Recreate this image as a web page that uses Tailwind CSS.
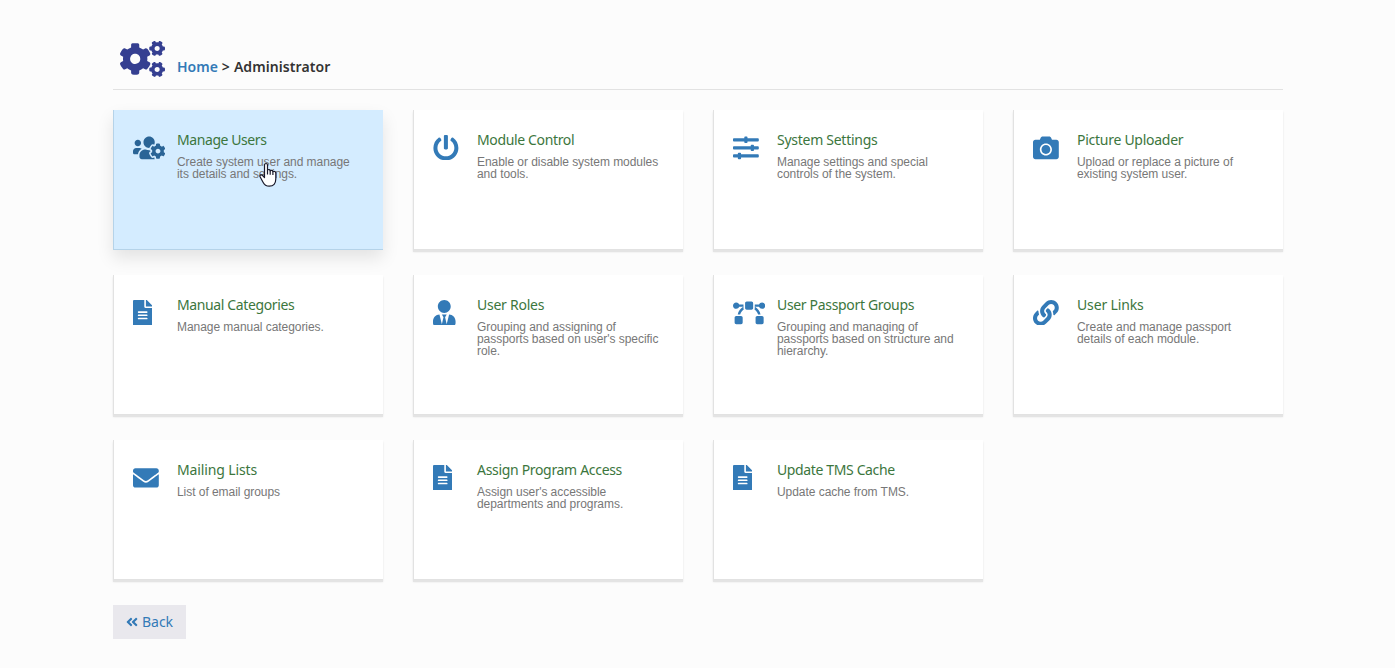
<!DOCTYPE html>
<html lang="en">
<head>
<meta charset="utf-8">
<title>Administrator</title>
<script src="https://cdn.jsdelivr.net/npm/@tailwindcss/browser@4"></script>
</head>
<body class="bg-[#fcfcfc] font-['Liberation_Sans',Arial,sans-serif]">
<svg class="hidden">
  <symbol id="file" viewBox="0 0 384 512"><path d="M224 136V0H24C10.700 0 0 10.700 0 24v464c0 13.300 10.700 24 24 24h336c13.300 0 24-10.700 24-24V160H248c-13.200 0-24-10.800-24-24zm64 236c0 6.600-5.400 12-12 12H108c-6.600 0-12-5.400-12-12v-8c0-6.600 5.400-12 12-12h168c6.600 0 12 5.400 12 12v8zm0-64c0 6.600-5.400 12-12 12H108c-6.600 0-12-5.400-12-12v-8c0-6.600 5.400-12 12-12h168c6.600 0 12 5.400 12 12v8zm0-72v8c0 6.600-5.400 12-12 12H108c-6.600 0-12-5.400-12-12v-8c0-6.600 5.400-12 12-12h168c6.600 0 12 5.400 12 12zm96-114.100v6.100H256V0h6.100c6.400 0 12.500 2.500 17 7l97.900 98c4.500 4.500 7 10.600 7 16.900z"/></symbol>
</svg>
<main class="w-[1170px] ml-[113px] pt-10">
  <header class="flex h-[50px] border-b border-[#e2e2e2]">
    <svg class="ml-[7px] mt-px w-[45px] h-9 shrink-0" viewBox="0 0 640 512" fill="#353f91"><path d="M512.1 191l-8.200 14.300c-3 5.300-9.400 7.500-15.100 5.400-11.800-4.400-22.600-10.700-32.100-18.600-4.600-3.800-5.800-10.500-2.800-15.700l8.200-14.300c-6.900-8-12.300-17.300-15.900-27.400h-16.500c-6 0-11.200-4.300-12.200-10.300-2-12-2.100-24.600 0-37.100 1-6 6.200-10.400 12.200-10.400h16.500c3.600-10.100 9-19.400 15.900-27.400l-8.200-14.300c-3-5.200-1.900-11.900 2.800-15.700 9.500-7.900 20.400-14.200 32.100-18.600 5.700-2.100 12.100.1 15.100 5.400l8.200 14.300c10.500-1.900 21.200-1.900 31.700 0L552 6.300c3-5.300 9.400-7.500 15.100-5.400 11.800 4.400 22.600 10.700 32.100 18.600 4.600 3.800 5.800 10.500 2.800 15.700l-8.200 14.300c6.900 8 12.300 17.300 15.900 27.400h16.500c6 0 11.200 4.300 12.200 10.300 2 12 2.100 24.600 0 37.100-1 6-6.200 10.400-12.200 10.400h-16.500c-3.600 10.100-9 19.400-15.900 27.400l8.200 14.300c3 5.200 1.900 11.900-2.800 15.700-9.500 7.900-20.400 14.200-32.100 18.600-5.700 2.100-12.100-.1-15.100-5.400l-8.200-14.300c-10.400 1.900-21.200 1.900-31.700 0zm-10.500-58.800c38.500 29.600 82.400-14.300 52.800-52.800-38.500-29.700-82.400 14.300-52.800 52.800zM386.300 286.100l33.700 16.800c10.100 5.800 14.500 18.100 10.500 29.100-8.900 24.200-26.400 46.400-42.600 65.800-7.400 8.900-20.200 11.100-30.300 5.300l-29.100-16.800c-16 13.700-34.600 24.600-54.900 31.700v33.600c0 11.600-8.300 21.600-19.700 23.600-24.600 4.200-50.400 4.400-75.900 0-11.500-2-20-11.900-20-23.600V418c-20.300-7.200-38.900-18-54.900-31.700L74 403c-10 5.800-22.900 3.600-30.300-5.300-16.200-19.400-33.300-41.600-42.200-65.700-4-10.900.4-23.200 10.500-29.100l33.300-16.800c-3.900-20.900-3.900-42.400 0-63.400L12 205.800c-10.100-5.800-14.600-18.100-10.500-29 8.900-24.200 26-46.400 42.200-65.800 7.400-8.900 20.200-11.100 30.300-5.300l29.100 16.800c16-13.700 34.600-24.600 54.900-31.700V57.100c0-11.500 8.200-21.500 19.600-23.500 24.600-4.200 50.500-4.400 76-.1 11.500 2 20 11.900 20 23.600v33.600c20.300 7.200 38.900 18 54.900 31.700l29.100-16.800c10-5.800 22.900-3.600 30.300 5.300 16.200 19.400 33.200 41.600 42.100 65.800 4 10.900.1 23.200-10 29.100l-33.700 16.800c3.900 21 3.900 42.500 0 63.500zm-117.600 21.100c59.200-77-28.700-164.900-105.700-105.700-59.200 77 28.700 164.900 105.700 105.700zm243.400 182.700l-8.200 14.300c-3 5.300-9.400 7.500-15.100 5.400-11.800-4.400-22.600-10.700-32.100-18.600-4.600-3.800-5.800-10.500-2.800-15.700l8.200-14.300c-6.900-8-12.300-17.300-15.900-27.400h-16.500c-6 0-11.200-4.300-12.200-10.300-2-12-2.100-24.600 0-37.100 1-6 6.200-10.400 12.200-10.400h16.500c3.600-10.100 9-19.400 15.900-27.400l-8.200-14.300c-3-5.200-1.900-11.900 2.800-15.700 9.500-7.900 20.400-14.200 32.100-18.600 5.700-2.100 12.100.1 15.100 5.400l8.200 14.300c10.500-1.900 21.200-1.900 31.700 0l8.200-14.300c3-5.300 9.400-7.500 15.100-5.400 11.800 4.400 22.600 10.700 32.100 18.600 4.600 3.800 5.800 10.500 2.800 15.700l-8.200 14.300c6.900 8 12.300 17.300 15.900 27.400h16.500c6 0 11.200 4.300 12.200 10.300 2 12 2.100 24.600 0 37.100-1 6-6.200 10.400-12.200 10.400h-16.500c-3.600 10.100-9 19.400-15.900 27.400l8.200 14.300c3 5.200 1.900 11.900-2.800 15.700-9.500 7.900-20.400 14.200-32.100 18.600-5.700 2.100-12.100-.1-15.100-5.400l-8.200-14.300c-10.400 1.900-21.200 1.900-31.700 0zM501.600 431c38.500 29.600 82.400-14.300 52.800-52.800-38.500-29.600-82.400 14.300-52.800 52.800z"/></svg>
    <h1 class="ml-3 mt-[17px] flex gap-1 font-['Noto_Sans',sans-serif] font-semibold text-[14px] leading-5 text-[#333]"><a class="text-[#337ab7]">Home</a><span>&gt;</span><span class="tracking-[0.08px]">Administrator</span></h1>
  </header>
  <section class="mt-5 grid grid-cols-4 gap-x-[30px] gap-y-[25px]" id="cards"></section>
  <a class="mt-[25px] flex h-[34px] w-[73px] items-center justify-center gap-1 bg-[#e9e8ed] font-['Noto_Sans',sans-serif] text-[14px] text-[#337ab7]"><svg class="h-[14px] w-3" viewBox="0 0 448 512" fill="currentColor"><path d="M223.700 239l136-136c9.400-9.400 24.600-9.400 33.900 0l22.600 22.600c9.400 9.400 9.400 24.600 0 33.900L319.900 256l96.400 96.400c9.400 9.400 9.400 24.600 0 33.900L393.700 409c-9.400 9.400-24.600 9.400-33.900 0l-136-136c-9.500-9.400-9.500-24.600-.1-34zm-192 34l136 136c9.400 9.400 24.600 9.400 33.900 0l22.600-22.600c9.400-9.400 9.400-24.600 0-33.900L127.900 256l96.400-96.400c9.400-9.400 9.400-24.600 0-33.900L201.700 103c-9.400-9.400-24.600-9.400-33.900 0l-136 136c-9.500 9.400-9.500 24.600-.1 34z"/></svg><span class="pb-0.5">Back</span></a>
</main>
<svg class="absolute left-[259px] top-[162px] w-[18px] h-[25px]" viewBox="0 0 18 25" fill="#fff" stroke="#1a1a2b" stroke-width="1.200" stroke-linejoin="round"><path d="M5.500 15.500V3.200c0-2.300 3-2.300 3 0V8c1-.9 2.500-.5 2.700.8 1-.8 2.500-.4 2.700.8 1.200-.7 2.900 0 2.900 1.600v5.500c0 5-2.300 7.500-6.500 7.500-3.600 0-5.200-1.800-6.400-4.200L1.200 15c-.8-1.600 1-3 2.400-1.500z"/><path d="M8.500 8v4.500M11.200 8.800v3.900M13.900 9.600v3.300" fill="none"/></svg>
<script>
const P = {
users: [640, "M610.5 341.3c2.6-14.1 2.6-28.5 0-42.6l25.8-14.9c3-1.7 4.3-5.2 3.3-8.5-6.7-21.6-18.2-41.2-33.2-57.4-2.3-2.5-6-3.1-9-1.4l-25.8 14.9c-10.9-9.3-23.4-16.5-36.9-21.3v-29.8c0-3.4-2.4-6.4-5.7-7.1-22.3-5-45-4.8-66.2 0-3.3.7-5.7 3.7-5.7 7.1v29.8c-13.5 4.8-26 12-36.9 21.3l-25.8-14.9c-2.9-1.7-6.7-1.1-9 1.4-15 16.2-26.5 35.8-33.2 57.4-1 3.3.4 6.8 3.3 8.5l25.8 14.9c-2.6 14.1-2.6 28.5 0 42.6l-25.8 14.9c-3 1.7-4.3 5.2-3.3 8.5 6.7 21.6 18.2 41.1 33.2 57.4 2.3 2.5 6 3.1 9 1.4l25.8-14.9c10.9 9.3 23.4 16.5 36.9 21.3v29.8c0 3.4 2.4 6.4 5.7 7.1 22.3 5 45 4.8 66.2 0 3.3-.7 5.7-3.7 5.7-7.1v-29.8c13.5-4.8 26-12 36.9-21.3l25.8 14.9c2.9 1.7 6.7 1.1 9-1.4 15-16.2 26.5-35.8 33.2-57.4 1-3.3-.4-6.8-3.3-8.5l-25.8-14.9zM496 368.5c-26.8 0-48.5-21.8-48.5-48.5s21.8-48.5 48.5-48.5 48.5 21.8 48.5 48.5-21.7 48.5-48.5 48.5zM96 224c35.3 0 64-28.7 64-64s-28.7-64-64-64-64 28.7-64 64 28.7 64 64 64zm224 32c1.9 0 3.7-.5 5.6-.6 8.3-21.7 20.5-42.1 36.3-59.2 7.4-8 17.9-12.6 28.9-12.6 6.9 0 13.7 1.8 19.6 5.3l7.9 4.6c.8-.5 1.6-.9 2.4-1.4 7-14.6 11.2-30.8 11.2-48 0-61.9-50.1-112-112-112S208 82.1 208 144c0 61.9 50.1 112 112 112zm105.2 194.5c-2.3-1.2-4.6-2.6-6.8-3.9-8.2 4.8-15.3 9.8-27.5 9.8-10.9 0-21.4-4.6-28.9-12.6-18.3-19.8-32.3-43.9-40.2-69.6-10.7-34.5 24.9-49.7 25.8-50.3-.1-2.6-.1-5.2 0-7.8l-7.9-4.6c-3.8-2.2-7-5-9.8-8.1-3.3.2-6.5.6-9.8.6-24.6 0-47.6-6-68.5-16h-8.3C179.6 288 128 339.6 128 403.2V432c0 26.5 21.5 48 48 48h255.4c-3.7-6-6.2-12.8-6.2-20.3v-9.2zM173.1 274.6C161.5 263.1 145.6 256 128 256H64c-35.3 0-64 28.7-64 64v32c0 17.7 14.3 32 32 32h65.900c6.300-47.400 34.900-87.300 75.200-109.400z"],
power: [512, "M400 54.1c63 45 104 118.6 104 201.9 0 136.8-110.8 247.7-247.5 248C120 504.3 8.2 393 8 256.4 7.9 173.1 48.900 99.300 111.800 54.200c11.700-8.300 28-4.800 35 7.700L162.600 90c5.900 10.500 3.100 23.800-6.600 31-41.500 30.800-68 79.600-68 134.900-.1 92.300 74.500 168.100 168 168.100 91.600 0 168.600-74.200 168-169.100-.3-51.800-24.700-101.800-68.100-134-9.700-7.200-12.400-20.500-6.500-30.900l15.800-28.100c7-12.400 23.200-16.100 34.800-7.800zM296 264V24c0-13.300-10.700-24-24-24h-32c-13.300 0-24 10.700-24 24v240c0 13.300 10.700 24 24 24h32c13.300 0 24-10.700 24-24z"],
sliders: [512, "M496 384H160v-16c0-8.800-7.200-16-16-16h-32c-8.800 0-16 7.200-16 16v16H16c-8.800 0-16 7.200-16 16v32c0 8.800 7.200 16 16 16h80v16c0 8.800 7.200 16 16 16h32c8.800 0 16-7.200 16-16v-16h336c8.800 0 16-7.200 16-16v-32c0-8.800-7.200-16-16-16zm0-160h-80v-16c0-8.800-7.200-16-16-16h-32c-8.800 0-16 7.200-16 16v16H16c-8.800 0-16 7.200-16 16v32c0 8.800 7.200 16 16 16h336v16c0 8.800 7.200 16 16 16h32c8.800 0 16-7.200 16-16v-16h80c8.800 0 16-7.200 16-16v-32c0-8.800-7.200-16-16-16zm0-160H288V48c0-8.800-7.200-16-16-16h-32c-8.800 0-16 7.200-16 16v16H16C7.200 64 0 71.200 0 80v32c0 8.800 7.200 16 16 16h208v16c0 8.800 7.200 16 16 16h32c8.800 0 16-7.200 16-16v-16h208c8.800 0 16-7.200 16-16V80c0-8.800-7.200-16-16-16z"],
camera: [512, "M512 144v288c0 26.500-21.500 48-48 48H48c-26.500 0-48-21.500-48-48V144c0-26.500 21.500-48 48-48h88l12.300-32.900c7-18.700 24.900-31.100 44.900-31.100h125.500c20 0 37.900 12.400 44.900 31.100L376 96h88c26.500 0 48 21.500 48 48zM376 288c0-66.200-53.800-120-120-120s-120 53.800-120 120 53.800 120 120 120 120-53.800 120-120zm-32 0c0 48.500-39.500 88-88 88s-88-39.500-88-88 39.500-88 88-88 88 39.500 88 88z"],
tie: [448, "M224 256c70.700 0 128-57.300 128-128S294.700 0 224 0 96 57.300 96 128s57.300 128 128 128zm95.800 32.600L272 480l-32-136 32-56h-96l32 56-32 136-47.800-191.400C56.900 292 0 350.300 0 422.400V464c0 26.500 21.500 48 48 48h352c26.500 0 48-21.500 48-48v-41.600c0-72.100-56.900-130.400-128.200-133.800z"],
bezier: [640, "M368 32h-96c-17.670 0-32 14.330-32 32v96c0 17.670 14.330 32 32 32h96c17.670 0 32-14.330 32-32V64c0-17.670-14.330-32-32-32zM208 88h-84.750C113.750 64.560 90.840 48 64 48 28.660 48 0 76.650 0 112s28.660 64 64 64c26.840 0 49.750-16.560 59.250-40h79.730c-55.370 32.520-95.860 87.320-109.540 152h49.400c11.300-41.610 36.770-77.210 71.040-101.560-3.700-8.080-5.880-16.990-5.880-26.440V88zm-48 232H64c-17.670 0-32 14.330-32 32v96c0 17.670 14.330 32 32 32h96c17.670 0 32-14.330 32-32v-96c0-17.670-14.330-32-32-32zM576 48c-26.840 0-49.750 16.560-59.250 40H432v72c0 9.450-2.190 18.360-5.880 26.440 34.270 24.350 59.740 59.950 71.040 101.560h49.400c-13.680-64.680-54.170-119.480-109.540-152h79.730c9.500 23.440 32.410 40 59.250 40 35.340 0 64-28.650 64-64s-28.660-64-64-64zm0 272h-96c-17.670 0-32 14.330-32 32v96c0 17.670 14.330 32 32 32h96c17.670 0 32-14.330 32-32v-96c0-17.670-14.330-32-32-32z"],
link: [512, "M326.612 185.391c59.747 59.809 58.927 155.698.36 214.590-.11.12-.24.25-.36.37l-67.200 67.200c-59.270 59.270-155.699 59.262-214.960 0-59.270-59.260-59.270-155.700 0-214.960l37.106-37.106c9.840-9.840 26.786-3.300 27.294 10.606.648 17.722 3.826 35.527 9.690 52.721 1.986 5.822.567 12.262-3.783 16.612l-13.087 13.087c-28.026 28.026-28.905 73.660-1.155 101.960 28.024 28.579 74.086 28.749 102.325.51l67.200-67.190c28.191-28.191 28.073-73.757 0-101.830-3.701-3.694-7.429-6.564-10.341-8.569a16.037 16.037 0 0 1-6.947-12.606c-.396-10.567 3.348-21.456 11.698-29.806l21.054-21.055c5.521-5.521 14.182-6.199 20.584-1.731a152.482 152.482 0 0 1 20.522 17.197zM467.547 44.449c-59.261-59.262-155.690-59.270-214.960 0l-67.200 67.200c-.12.12-.25.25-.36.37-58.566 58.892-59.387 154.781.36 214.590a152.454 152.454 0 0 0 20.521 17.196c6.402 4.468 15.064 3.789 20.584-1.731l21.054-21.055c8.350-8.350 12.094-19.239 11.698-29.806a16.037 16.037 0 0 0-6.947-12.606c-2.912-2.005-6.640-4.875-10.341-8.569-28.073-28.073-28.191-73.639 0-101.830l67.200-67.190c28.239-28.239 74.300-28.069 102.325.51 27.750 28.300 26.872 73.934-1.155 101.960l-13.087 13.087c-4.350 4.350-5.769 10.790-3.783 16.612 5.864 17.194 9.042 34.999 9.690 52.721.509 13.906 17.454 20.446 27.294 10.606l37.106-37.106c59.271-59.259 59.271-155.699.001-214.959z"],
mail: [512, "M502.300 190.800c3.900-3.100 9.700-.2 9.700 4.700V400c0 26.500-21.500 48-48 48H48c-26.500 0-48-21.500-48-48V195.600c0-5 5.700-7.800 9.700-4.700 22.400 17.400 52.100 39.500 154.100 113.600 21.100 15.400 56.700 47.800 92.200 47.600 35.700.3 72-32.800 92.300-47.600 102-74.100 131.600-96.300 154-113.700zM256 320c23.200.4 56.600-29.200 73.400-41.400 132.700-96.300 142.800-104.700 173.400-128.700 5.800-4.500 9.200-11.500 9.200-18.900v-19c0-26.500-21.500-48-48-48H48c-26.500 0-48 21.500-48 48v19c0 7.400 3.400 14.300 9.200 18.900 30.600 23.900 40.700 32.400 173.400 128.700 16.800 12.200 50.200 41.800 73.400 41.400z"],
file: [384, null]
};
/* icon, title, description, title letter spacing in px */
const cards = [
["users","Manage Users","Create system user and manage its details and settings.",-0.42],
["power","Module Control","Enable or disable system modules and tools.",-0.36],
["sliders","System Settings","Manage settings and special controls of the system.",-0.27],
["camera","Picture Uploader","Upload or replace a picture of existing system user.",-0.27],
["file","Manual Categories","Manage manual categories.",-0.38],
["tie","User Roles","Grouping and assigning of passports based on user's specific role.",-0.25],
["bezier","User Passport Groups","Grouping and managing of passports based on structure and hierarchy.",-0.33],
["link","User Links","Create and manage passport details of each module.",-0.15],
["mail","Mailing Lists","List of email groups",-0.12],
["file","Assign Program Access","Assign user's accessible departments and programs.",-0.32],
["file","Update TMS Cache","Update cache from TMS.",-0.37]
];
document.getElementById("cards").innerHTML = cards.map(([icon, title, text, spacing], i) => {
  const [w, d] = P[icon];
  const tone = i === 0
    ? "bg-[#d4ecff] border-[#b5d3e9] text-[#2a6496] shadow-[0_8px_16px_rgba(0,0,0,0.1)]"
    : "bg-white border-[#e2e2e2] text-[#337ab7] shadow-[0_2px_0_#e4e4e4,0_2px_2px_rgba(0,0,0,0.1)]";
  return `<article class="flex h-[140px] border-l border-b pl-[19px] pt-[25px] ${tone}">
    <div class="w-11 shrink-0"><svg class="-mt-[0.4px] h-[25.8px]" style="width:${w * 25.8 / 512}px" viewBox="0 0 ${w} 512" fill="currentColor">${d ? `<path d="${d}"/>` : '<use href="#file"/>'}</svg></div>
    <div class="w-[184px] -mt-1"><h2 class="font-['Noto_Sans',sans-serif] text-[14px] leading-[18px] text-[#3c763d] whitespace-nowrap" style="letter-spacing:${spacing}px">${title}</h2>
    <p class="mt-[7px] text-[12px] leading-3 tracking-[-0.05px] text-[#777]">${text}</p></div>
  </article>`;
}).join("");
</script>
</body>
</html>
